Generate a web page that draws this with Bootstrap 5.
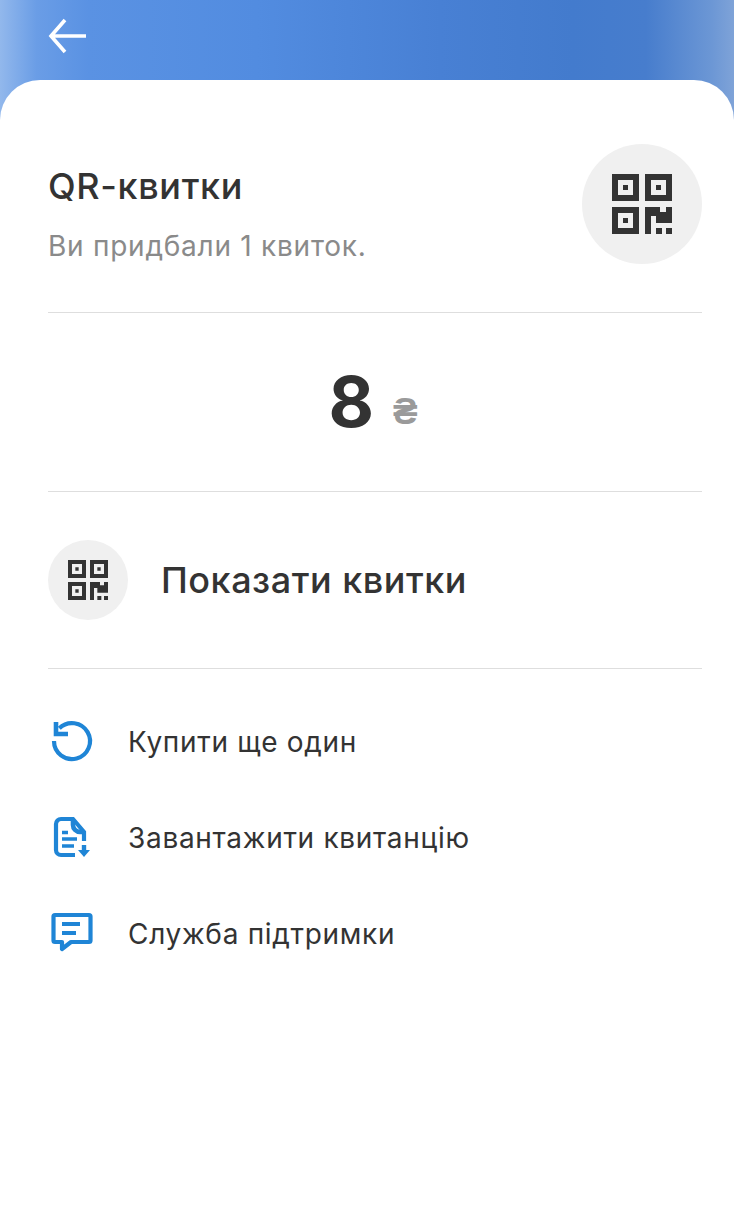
<!DOCTYPE html>
<html lang="uk">
<head>
  <meta charset="UTF-8">
  <title>QR-квитки</title>
  <meta name="viewport" content="width=device-width, initial-scale=1">
  <link href="https://cdn.jsdelivr.net/npm/bootstrap@5.3.0/dist/css/bootstrap.min.css" rel="stylesheet">
  <style>
    body {
      background: #fff;
      font-family: Inter, "Liberation Sans", sans-serif;
      color: #333;
    }
    .top-bar {
      height: 120px;
      padding: 16px 0 0 48px;
      background: linear-gradient(90deg, #92b8ec 0, #6a9de6 5%, #5a92e3 12%, #528ce0 35%, #4880d4 60%, #437bcd 78%, #477dcd 88%, #6c97d5 97%, #7fa3d8 100%);
    }
    .sheet {
      margin-top: -40px;
      min-height: 1129px;
      padding: 64px 32px 0 48px;
      background: #fff;
      border-radius: 40px 40px 0 0;
    }
    .ticket-head {
      height: 168px;
    }
    .ticket-title {
      font-size: 36px;
      font-weight: 500;
      line-height: 44px;
      letter-spacing: .65px;
      margin-bottom: 22px;
    }
    .ticket-sub {
      font-size: 28px;
      line-height: 32px;
      letter-spacing: .75px;
      color: #8a8a8a;
    }
    .qr-circle {
      flex: none;
      background: #f0f0f0;
    }
    .qr-lg { width: 120px; height: 120px; }
    .qr-lg svg { width: 60px; height: 60px; }
    .qr-sm { width: 80px; height: 80px; }
    .qr-sm svg { width: 40px; height: 40px; }
    .rule {
      border-top: 1px solid #dedede;
    }
    .price-box {
      height: 178px;
      padding-right: 4px;
    }
    .price-num {
      font-size: 70px;
      font-weight: 700;
      line-height: 1;
    }
    .price-cur {
      font-family: Roboto, sans-serif;
      font-size: 37px;
      font-weight: 700;
      color: #9a9a9a;
      margin-left: 19px;
      margin-top: 20px;
    }
    .show-row {
      height: 176px;
      gap: 33px;
    }
    .show-text {
      font-size: 36px;
      font-weight: 500;
      letter-spacing: .53px;
    }
    .act-list {
      padding-top: 25px;
    }
    .act-row {
      height: 96px;
      font-size: 28px;
      letter-spacing: .7px;
      color: #333;
    }
    .act-icon {
      flex: none;
      width: 48px;
      height: 48px;
      margin-right: 32px;
      fill: none;
      stroke: #1f85d6;
    }
  </style>
</head>
<body>
  <svg width="0" height="0" class="d-block">
    <symbol id="qr" viewBox="0 0 60 60">
      <path fill="#333" fill-rule="evenodd" d="M0 0h27v27H0zM6 6v15h15V6zM11 11h5v5h-5zM33 0h27v27H33zM39 6v15h15V6zM44 11h5v5h-5zM0 33h27v27H0zM6 39v15h15V39zM11 44h5v5h-5z"/>
      <path fill="#333" d="M33 33h15v5h6v-5h6v16H44v-7h-5v18h-6zM44 54h6v6h-6zM54 54h6v6h-6z"/>
    </symbol>
  </svg>

  <div class="top-bar">
    <svg width="40" height="40" viewBox="0 0 40 40" fill="none" stroke="#fff" stroke-width="3.6">
      <path d="M38 20H3M17 4 3 20l14 16"/>
    </svg>
  </div>

  <div class="sheet">
    <div class="ticket-head d-flex justify-content-between align-items-start">
      <div class="pt-3 mt-1">
        <div class="ticket-title">QR-квитки</div>
        <div class="ticket-sub">Ви придбали 1 квиток.</div>
      </div>
      <div class="qr-circle qr-lg rounded-circle d-flex align-items-center justify-content-center">
        <svg><use href="#qr"/></svg>
      </div>
    </div>

    <div class="rule"></div>
    <div class="price-box d-flex align-items-center justify-content-center">
      <span class="price-num">8</span>
      <span class="price-cur">₴</span>
    </div>
    <div class="rule"></div>

    <div class="show-row d-flex align-items-center">
      <div class="qr-circle qr-sm rounded-circle d-flex align-items-center justify-content-center">
        <svg><use href="#qr"/></svg>
      </div>
      <span class="show-text">Показати квитки</span>
    </div>
    <div class="rule"></div>

    <div class="act-list">
      <div class="act-row d-flex align-items-center">
        <svg class="act-icon" viewBox="0 0 48 48" stroke-width="4.2">
          <path d="M11.300 10.300A18 18 0 1 1 6 23"/>
          <path d="M8 4v12h12" stroke-width="4.6"/>
        </svg>
        <span>Купити ще один</span>
      </div>
      <div class="act-row d-flex align-items-center">
        <svg class="act-icon" viewBox="0 0 48 48" stroke-width="4.2">
          <path d="M27 41H13a5 5 0 0 1-5-5V10a5 5 0 0 1 5-5h12l11 13v9"/>
          <path d="M25 6v5a7 7 0 0 0 7 7h4" stroke-width="4.6"/>
          <path d="M14 18.500h6M14 25h15M14 32h12" stroke-width="3.6"/>
          <path d="M36 31v7" stroke-width="4.4"/>
          <path d="M30 36h12l-6 7z" fill="#1f85d6" stroke="none"/>
        </svg>
        <span>Завантажити квитанцію</span>
      </div>
      <div class="act-row d-flex align-items-center">
        <svg class="act-icon" viewBox="0 0 48 48" stroke-width="4.2">
          <path d="M7 5h34a1.500 1.500 0 0 1 1.500 1.500v24a1.500 1.500 0 0 1-1.500 1.500H23l-9 7v-7H7a1.500 1.500 0 0 1-1.500-1.500v-24A1.500 1.500 0 0 1 7 5z" stroke-linejoin="round"/>
          <path d="M14 14h18M14 23h14" stroke-width="3.8"/>
        </svg>
        <span>Служба підтримки</span>
      </div>
    </div>
  </div>

  <script src="https://cdn.jsdelivr.net/npm/bootstrap@5.3.0/dist/js/bootstrap.bundle.min.js"></script>
</body>
</html>
